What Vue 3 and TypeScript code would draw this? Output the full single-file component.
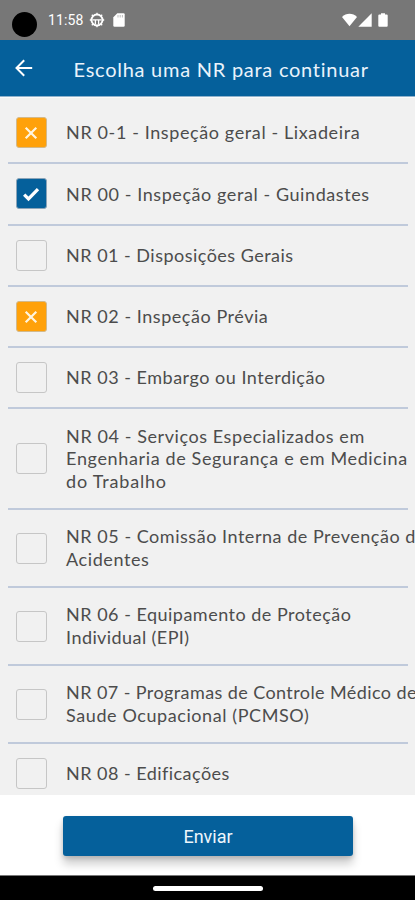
<script setup lang="ts">
import { ref } from 'vue'

type State = 'rejected' | 'checked' | 'empty'
interface Line { text: string; tracking: number }
interface Item { state: State; lines: Line[] }

const items = ref<Item[]>([
  { state: 'rejected', lines: [{ text: 'NR 0-1 - Inspeção geral - Lixadeira', tracking: 0.61 }] },
  { state: 'checked', lines: [{ text: 'NR 00 - Inspeção geral - Guindastes', tracking: 0.58 }] },
  { state: 'empty', lines: [{ text: 'NR 01 - Disposições Gerais', tracking: 0.48 }] },
  { state: 'rejected', lines: [{ text: 'NR 02 - Inspeção Prévia', tracking: 0.54 }] },
  { state: 'empty', lines: [{ text: 'NR 03 - Embargo ou Interdição', tracking: 0.51 }] },
  {
    state: 'empty',
    lines: [
      { text: 'NR 04 - Serviços Especializados em', tracking: 0.58 },
      { text: 'Engenharia de Segurança e em Medicina', tracking: 0.64 },
      { text: 'do Trabalho', tracking: 0.8 },
    ],
  },
  {
    state: 'empty',
    lines: [
      { text: 'NR 05 - Comissão Interna de Prevenção de', tracking: 0.53 },
      { text: 'Acidentes', tracking: 0.58 },
    ],
  },
  {
    state: 'empty',
    lines: [
      { text: 'NR 06 - Equipamento de Proteção', tracking: 0.49 },
      { text: 'Individual (EPI)', tracking: 0.42 },
    ],
  },
  {
    state: 'empty',
    lines: [
      { text: 'NR 07 - Programas de Controle Médico de', tracking: 0.41 },
      { text: 'Saude Ocupacional (PCMSO)', tracking: 0.58 },
    ],
  },
  { state: 'empty', lines: [{ text: 'NR 08 - Edificações', tracking: 0.46 }] },
])

function toggle(item: Item) {
  item.state = item.state === 'empty' ? 'checked' : 'empty'
}
</script>

<template>
  <div class="screen">
    <div class="status">
      <span class="camera"></span>
      <span class="time">11:58</span>
      <svg class="bug" viewBox="0 0 16 16" width="16" height="16">
        <circle cx="8" cy="8" r="5.500" fill="none" stroke="#fff" stroke-width="1.900" />
        <path d="M8 .8v2M8 13v2.200M.8 8h2M13.200 8h2M2.800 2.800l1.500 1.500M13.200 2.800l-1.500 1.500M2.800 13.200l1.500-1.500M13.200 13.200l-1.500-1.500M3.500 7.800h9M6.400 8v4.500M9.600 8v4.500" fill="none" stroke="#fff" stroke-width="1.300" />
      </svg>
      <svg class="card" viewBox="0 0 12 14" width="12" height="14">
        <path d="M4.300.3H10.500Q11.700.3 11.700 1.500V12.500Q11.700 13.700 10.500 13.700H1.500Q.3 13.700.3 12.500V4.300Z" fill="#fff" />
        <path d="M5 2v2.500M7.200 2v2.500M9.400 2v2.500" stroke="#bbb" stroke-width="1" />
      </svg>
      <span class="spacer"></span>
      <svg class="wifi" viewBox="0 0 16 14" width="15" height="14">
        <path d="M0 3.900Q3.400.4 8 .4T16 3.900L8 13.600Z" fill="#fff" />
      </svg>
      <svg class="signal" viewBox="0 0 14 14" width="14" height="14">
        <path d="M13.700.3V13.700H.3Z" fill="#fff" />
      </svg>
      <svg class="battery" viewBox="0 0 10 14" width="10" height="14">
        <path d="M3 .2H7V1.600H8.700Q9.700 1.600 9.700 2.600V12.800Q9.700 13.800 8.700 13.800H1.300Q.3 13.800.3 12.800V2.600Q.3 1.600 1.300 1.600H3Z" fill="#fff" />
      </svg>
    </div>

    <header class="header">
      <svg class="back" viewBox="0 0 18 18" width="18" height="18">
        <path d="M17.200 9H2M9.200 1.300L1.500 9l7.700 7.700" fill="none" stroke="#fff" stroke-width="2" />
      </svg>
      <h1 class="title">Escolha uma NR para continuar</h1>
    </header>

    <main class="list">
      <div v-for="(item, i) in items" :key="i" class="row" @click="toggle(item)">
        <span class="box" :class="item.state">
          <svg v-if="item.state === 'rejected'" viewBox="0 0 30 30" width="30" height="30">
            <path d="M9.700 9.700l10.600 10.600M20.300 9.700l-10.600 10.600" fill="none" stroke="#fff5df" stroke-width="2.200" />
          </svg>
          <svg v-else-if="item.state === 'checked'" viewBox="0 0 30 30" width="30" height="30">
            <path d="M8.200 15.600l4.300 4.300L22 10.200" fill="none" stroke="#fff" stroke-width="3.300" />
          </svg>
        </span>
        <div class="label">
          <div v-for="line in item.lines" :key="line.text" :style="{ letterSpacing: line.tracking + 'px' }">{{ line.text }}</div>
        </div>
      </div>
    </main>

    <footer class="footer">
      <button class="send" type="button">Enviar</button>
    </footer>
    <div class="nav"><span class="pill"></span></div>
  </div>
</template>

<style>
body {
  margin: 0;
}
</style>

<style scoped>
.screen {
  display: flex;
  flex-direction: column;
  width: 415px;
  height: 900px;
  overflow: hidden;
  background: #fff;
  font-family: Lato, "Open Sans", sans-serif;
}
.status {
  display: flex;
  flex: none;
  align-items: center;
  box-sizing: border-box;
  height: 40px;
  padding: 0 27px 0 12px;
  background: #777;
}
.camera {
  width: 25px;
  height: 25px;
  margin-top: 8px;
  border-radius: 50%;
  background: #000;
}
.time {
  margin-left: 11px;
  width: 36px;
  color: #fff;
  font: 400 14px/16px Roboto, sans-serif;
  letter-spacing: 0.1px;
  white-space: nowrap;
}
.bug {
  margin-left: 4.500px;
}
.card {
  margin-left: 8.500px;
}
.spacer {
  flex: 1;
}
.signal {
  margin-left: 1px;
}
.battery {
  margin-left: 6px;
}
.header {
  display: flex;
  flex: none;
  align-items: center;
  box-sizing: border-box;
  height: 57px;
  padding-left: 14.500px;
  border-bottom: 1px solid #8fb2cc;
  background: #05609b;
}
.title {
  margin: 1px 0 0 41px;
  color: #eaf3fb;
  font-size: 20px;
  font-weight: 400;
  line-height: 26px;
  letter-spacing: 0.74px;
  white-space: nowrap;
}
.list {
  flex: none;
  box-sizing: border-box;
  height: 698px;
  padding: 5px 7px 0 8px;
  border-top: 1px solid #fafafa;
  overflow: hidden;
  background: #f1f1f1;
}
.row {
  display: flex;
  align-items: center;
  box-sizing: border-box;
  min-height: 61.300px;
  padding-left: 7.500px;
  border-bottom: 2px solid #c0cadb;
}
.box {
  flex: none;
  box-sizing: border-box;
  width: 31px;
  height: 31px;
  border: 1px solid #c6c6c6;
  border-radius: 3px;
}
.box svg {
  display: block;
  margin: -0.500px;
}
.rejected {
  border-color: #d3b98a;
  background: #ffa10a;
}
.checked {
  border-color: #8ba4b8;
  background: #05609b;
}
.label {
  margin-left: 19.600px;
  padding: 15.200px 0;
  color: #4c4c4c;
  font-size: 18px;
  line-height: 22.800px;
  white-space: nowrap;
}
.footer {
  flex: none;
  box-sizing: border-box;
  height: 81px;
  padding: 21px 62px 0 63px;
  border-bottom: 1px solid #777;
  background: #fff;
}
.send {
  display: block;
  width: 100%;
  height: 40px;
  padding: 2px 0 0;
  border: 0;
  border-radius: 3px;
  background: #05609b;
  box-shadow: 0 8px 10px rgba(0, 0, 0, 0.2), 0 2px 4px rgba(0, 0, 0, 0.15);
  color: #eef6fc;
  font: 400 18px/22px Roboto, sans-serif;
}
.nav {
  display: flex;
  flex: 1;
  justify-content: center;
  background: #000;
}
.pill {
  width: 110px;
  height: 5px;
  margin-top: 10px;
  border-radius: 3px;
  background: #fff;
}
</style>
